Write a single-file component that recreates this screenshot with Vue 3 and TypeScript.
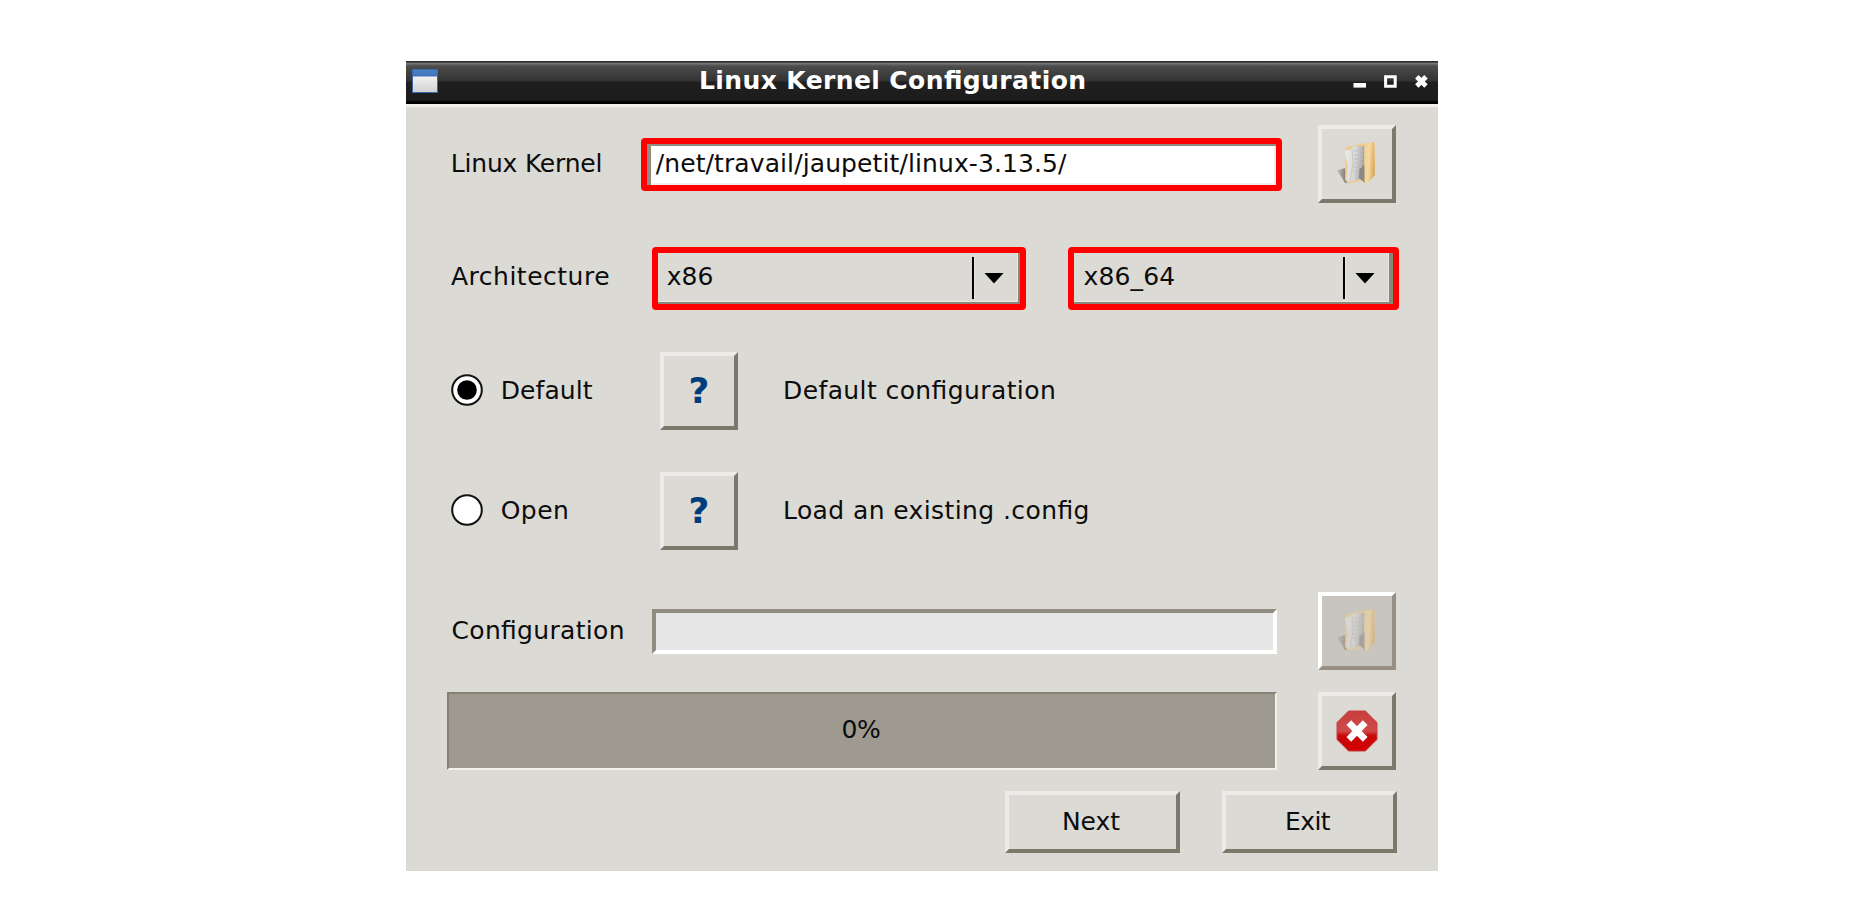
<script setup lang="ts">
import { ref } from 'vue'

const kernelPath = ref('/net/travail/jaupetit/linux-3.13.5/')
const mode = ref<'default' | 'open'>('default')
const progress = ref(0)

interface ModeOption {
  id: 'default' | 'open'
  label: string
  hint: string
}

const modes: ModeOption[] = [
  { id: 'default', label: 'Default', hint: 'Default configuration' },
  { id: 'open', label: 'Open', hint: 'Load an existing .config' },
]
</script>

<template>
  <svg width="0" height="0" class="defs">
    <defs>
      <linearGradient id="folderFront" x1="0" y1="0" x2="1" y2="0.25">
        <stop offset="0" stop-color="#f0d096" />
        <stop offset="0.5" stop-color="#f6d89e" />
        <stop offset="1" stop-color="#d8ab62" />
      </linearGradient>
      <linearGradient id="paper" x1="0" y1="0" x2="1" y2="0.2">
        <stop offset="0" stop-color="#efefef" />
        <stop offset="0.6" stop-color="#d6d6d6" />
        <stop offset="1" stop-color="#a3a2a0" />
      </linearGradient>
      <linearGradient id="shade" x1="0" y1="0" x2="1" y2="0">
        <stop offset="0" stop-color="#8c8a86" stop-opacity="0.35" />
        <stop offset="1" stop-color="#5e5a55" />
      </linearGradient>
      <symbol id="folder" viewBox="0 0 40 46">
        <path d="M0 29.5 L8 27 L12 41 L8 42 L5 37Z" fill="url(#shade)" />
        <path d="M9 6 L27 2.5 L36.5 1 L38 3 V32 L30 43 L25 40 L11 42.5 L8 39Z" fill="#edcb92" />
        <path d="M8 10 L15 8 L15.5 5.5 L27.5 5 L27 26 L23 38 L12 41 L9.5 38 L11 26Z" fill="url(#paper)" />
        <path d="M17 10 H26 M17 14 H26 M17 18 H26 M16.5 22 H25.5 M16 26 H24.5 M15.5 30 H23" stroke="#c0c0c0" stroke-width="1" />
        <path d="M15 8 L16 22 L13 40" fill="none" stroke="#c4c4c4" stroke-width="0.9" />
        <path d="M22.5 28 L28 24 V42 L22 37Z" fill="#8b8985" />
        <path d="M27.5 3 L37 1 L38 34 L29.5 43.5 L27.5 41Z" fill="url(#folderFront)" />
      </symbol>
      <linearGradient id="stopRed" x1="0" y1="0" x2="0" y2="1">
        <stop offset="0" stop-color="#c83c3c" />
        <stop offset="0.5" stop-color="#d04a4a" />
        <stop offset="0.62" stop-color="#c80808" />
        <stop offset="1" stop-color="#d40000" />
      </linearGradient>
    </defs>
  </svg>

  <main class="window">
    <header class="titlebar">
      <span class="app-icon"></span>
      <h1 class="title">Linux Kernel Configuration</h1>
      <svg class="controls" width="76" height="14" viewBox="0 0 76 14">
        <rect x="0.5" y="8" width="12.5" height="4.6" fill="#fff" />
        <path d="M32.6 1.7 H42.2 V11.3 H32.6Z" fill="none" stroke="#fff" stroke-width="3" />
        <path d="M63.8 1.8 L73 11 M73 1.8 L63.8 11" stroke="#fff" stroke-width="4.8" />
      </svg>
    </header>

    <form class="body" @submit.prevent>
      <div class="row kernel-row">
        <label class="label kernel-label">Linux Kernel</label>
        <div class="entry marked">{{ kernelPath }}</div>
        <button class="bevel square" type="button">
          <svg class="folder-icon"><use href="#folder" /></svg>
        </button>
      </div>

      <div class="row arch-row">
        <label class="label arch-label">Architecture</label>
        <div class="combo marked combo-arch">
          <span class="combo-value">x86</span>
          <i class="divider"></i><i class="arrow"></i>
        </div>
        <div class="combo marked combo-sub">
          <span class="combo-value sub-value">x86_64</span>
          <i class="divider"></i><i class="arrow"></i>
        </div>
      </div>

      <div v-for="m in modes" :key="m.id" class="row mode-row" :class="m.id">
        <div class="choice" @click="mode = m.id">
          <svg class="radio" width="34" height="34" viewBox="0 0 34 34">
            <circle cx="17" cy="17" r="14.8" fill="#fff" stroke="#111" stroke-width="2" />
            <circle v-if="mode === m.id" cx="17" cy="17" r="9.8" fill="#000" />
          </svg>
          <span class="choice-label">{{ m.label }}</span>
        </div>
        <button class="bevel square help" type="button">?</button>
        <span class="hint">{{ m.hint }}</span>
      </div>

      <div class="row config-row">
        <label class="label config-label">Configuration</label>
        <div class="config-entry"></div>
        <button class="bevel square disabled" type="button" disabled>
          <svg class="folder-icon"><use href="#folder" /></svg>
        </button>
      </div>

      <div class="row progress-row">
        <div class="progress"><span class="percent">{{ progress }}%</span></div>
        <button class="bevel square" type="button">
          <svg class="stop-icon" width="42" height="42" viewBox="0 0 42 42">
            <path d="M12.6 1 H29.4 L41 12.6 V29.4 L29.4 41 H12.6 L1 29.4 V12.6Z" fill="url(#stopRed)" stroke="#c44040" stroke-width="1" />
            <path d="M12.8 12.6 L29.2 29.4 M29.2 12.6 L12.8 29.4" stroke="#fff" stroke-width="6.6" />
          </svg>
        </button>
      </div>

      <footer class="row footer-row">
        <button class="bevel action" type="button"><span class="next">Next</span></button>
        <button class="bevel action" type="button"><span class="exit">Exit</span></button>
      </footer>
    </form>
  </main>
</template>

<style>
body {
  background: #fff;
}
</style>

<style scoped>
.defs {
  position: absolute;
}
.window {
  box-sizing: border-box;
  width: 1032px;
  height: 810px;
  margin: 61px 0 0 406px;
  background: #dbdad5;
  font-family: 'DejaVu Sans', sans-serif;
  font-size: 25px;
  line-height: 30px;
  font-feature-settings: 'liga' 1;
  color: #0c0c0c;
  white-space: nowrap;
}
.titlebar {
  box-sizing: border-box;
  display: flex;
  align-items: center;
  height: 43px;
  padding: 0 9px 2px 6px;
  background: linear-gradient(#2e2e2e 0, #2e2e2e 1px, #777 2.5px, #4c4c4c 5px, #333 20px, #1f1f1f 21px, #1c1c1c 39px, #000 41px, #000 100%);
}
.app-icon {
  box-sizing: border-box;
  width: 26px;
  height: 24px;
  margin-top: -2px;
  border: 1px solid #3c68a8;
  background: linear-gradient(#4a80c4 0, #3f74ba 6px, #f0f0f0 7px, #d2d2d2 100%);
}
.title {
  flex: 1;
  margin: -1px 0 0 261px;
  font-size: 25px;
  font-weight: bold;
  letter-spacing: 0.4px;
  color: #fff;
}
.controls {
  margin-top: 1px;
}
.body {
  padding: 18px 41px 0 41px;
  border-top: 3px solid #efeeea;
}
.row {
  display: flex;
  align-items: center;
  height: 78px;
}
.label {
  box-sizing: border-box;
  flex: none;
}
.kernel-label {
  width: 194px;
  padding-left: 3.8px;
  letter-spacing: -0.2px;
}
.arch-label {
  width: 205px;
  padding: 0 0 3px 4px;
  letter-spacing: 0.5px;
}
.config-label {
  width: 205px;
  padding-left: 4.5px;
  letter-spacing: 0.32px;
}
.marked {
  box-sizing: border-box;
  flex: none;
  border: 6px solid #f00;
  border-radius: 4px;
}
.entry {
  width: 641px;
  height: 53px;
  margin: 1px 36px 0 0;
  padding: 5px 0 0 8.7px;
  background: #fff;
  box-shadow: inset 4px 2px 0 #918c80, inset -2px -2px 0 #f0efec;
  letter-spacing: 0.1px;
}
.bevel {
  box-sizing: border-box;
  flex: none;
  padding: 0;
  border: 4px solid;
  border-color: #ecebe8 #7d786c #7d786c #ecebe8;
  background: #dbdad5;
  font: inherit;
  color: inherit;
}
.square {
  display: flex;
  align-items: center;
  justify-content: center;
  width: 78px;
  height: 78px;
}
.folder-icon {
  width: 40px;
  height: 46px;
}
.disabled {
  background: #c8c5be;
  border-color: #fff #979082 #979082 #fff;
}
.disabled .folder-icon {
  opacity: 0.55;
}
.arch-row {
  height: 63px;
  margin-top: 44px;
}
.combo {
  display: flex;
  align-items: center;
  height: 63px;
  padding: 0 16px 0 8.7px;
  box-shadow: inset -2px -2px 0 #8b867a, inset -3px -3px 0 #e9e8e4;
}
.combo-arch {
  width: 374px;
  margin-right: 42px;
}
.combo-sub {
  width: 331px;
  padding-right: 18px;
  box-shadow: inset -4px -2px 0 #8b867a, inset -5px -3px 0 #e9e8e4;
}
.combo-value {
  flex: 1;
  padding-bottom: 3px;
}
.sub-value {
  padding-left: 0.8px;
  letter-spacing: 0.15px;
}
.divider {
  width: 2px;
  height: 42px;
  margin: 0 10px 1px 0;
  background: #000;
  box-shadow: 1px 0 0 #e8e7e3;
}
.arrow {
  width: 20px;
  height: 11px;
  margin-bottom: 1px;
  background: #000;
  clip-path: polygon(0 0, 100% 0, 50% 100%);
}
.mode-row {
  margin-top: 42px;
}
.choice {
  display: flex;
  align-items: center;
  width: 213px;
}
.radio {
  margin: 0 0 2px 2.7px;
}
.choice-label {
  margin-left: 17px;
  letter-spacing: 0.1px;
}
.open .choice-label {
  letter-spacing: 0.5px;
}
.help {
  font-size: 36px;
  font-weight: bold;
  color: #003d7d;
}
.hint {
  margin-left: 45px;
  letter-spacing: 0.4px;
}
.config-row {
  margin-top: 42px;
}
.config-entry {
  box-sizing: border-box;
  width: 625px;
  height: 45px;
  margin: 1px 41px 0 0;
  background: #e6e6e6;
  border: 4px solid;
  border-color: #918c80 #fff #fff #918c80;
}
.progress-row {
  margin-top: 22px;
}
.progress {
  box-sizing: border-box;
  display: flex;
  align-items: center;
  justify-content: center;
  width: 830px;
  height: 78px;
  margin-right: 41px;
  background: #9e9991;
  border: 2px solid;
  border-color: #878173 #f1f0ed #f1f0ed #878173;
}
.percent {
  margin: 0 2px 2px 0;
  letter-spacing: -0.4px;
}
.footer-row {
  justify-content: flex-end;
  height: 62px;
  margin-top: 21px;
  gap: 42px;
}
.action {
  width: 175px;
  height: 62px;
}
.next {
  margin-right: 3px;
}
.exit {
  margin-right: 4px;
  letter-spacing: -0.6px;
}
</style>
